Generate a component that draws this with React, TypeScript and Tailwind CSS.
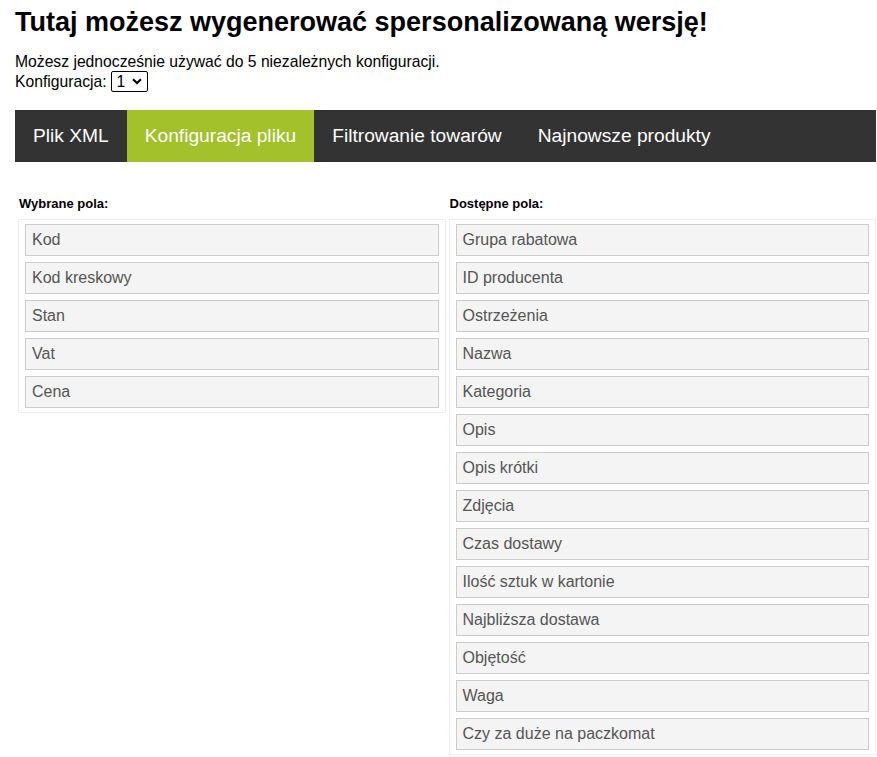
import React, { useState } from 'react';

const selectedFields = ['Kod', 'Kod kreskowy', 'Stan', 'Vat', 'Cena'];

const availableFields = [
  'Grupa rabatowa',
  'ID producenta',
  'Ostrzeżenia',
  'Nazwa',
  'Kategoria',
  'Opis',
  'Opis krótki',
  'Zdjęcia',
  'Czas dostawy',
  'Ilość sztuk w kartonie',
  'Najbliższa dostawa',
  'Objętość',
  'Waga',
  'Czy za duże na paczkomat',
];

const tabs = ['Plik XML', 'Konfiguracja pliku', 'Filtrowanie towarów', 'Najnowsze produkty'];

function FieldList({ title, items }: { title: string; items: string[] }) {
  return (
    <div className="pl-[3px]">
      <h3 className="text-[13px] font-bold text-black pl-[1px] mb-[5px]">{title}</h3>
      <ul className="border border-[#eeeeee] px-[6px] py-[4px] flex flex-col gap-[6px]">
        {items.map((item) => (
          <li
            key={item}
            className="h-[32px] flex items-center px-[6px] bg-[#f4f4f4] border border-[#cccccc] text-[16px] text-[#555555]"
          >
            {item}
          </li>
        ))}
      </ul>
    </div>
  );
}

export default function App() {
  const [config, setConfig] = useState('1');
  const [active, setActive] = useState(1);

  return (
    <div className="pl-[15px] pr-[1px] pt-[5px] pb-4 bg-white text-black font-['Liberation_Sans',Arial,sans-serif]">
      <h1 className="text-[27px] font-bold leading-[34px]">
        Tutaj możesz wygenerować spersonalizowaną wersję!
      </h1>

      <p className="mt-[14px] text-[15.7px] leading-[18px]">
        Możesz jednocześnie używać do 5 niezależnych konfiguracji.
      </p>
      <div className="text-[15.7px] leading-[20px] flex items-center gap-[4px]">
        <span>Konfiguracja:</span>
        <div className="relative">
          <select
            value={config}
            onChange={(e) => setConfig(e.target.value)}
            className="appearance-none border border-black rounded-[2px] h-[21px] w-[37px] pl-[5px] text-[15.7px] leading-[19px] bg-white"
          >
            {[1, 2, 3, 4, 5].map((n) => (
              <option key={n} value={n}>
                {n}
              </option>
            ))}
          </select>
          <svg
            className="absolute right-[6px] top-[7px] pointer-events-none"
            width="10"
            height="7"
            viewBox="0 0 10 7"
          >
            <path d="M1 1.2 L5 5 L9 1.2" fill="none" stroke="black" strokeWidth="2" />
          </svg>
        </div>
      </div>

      <nav className="mt-[18px] h-[52px] bg-[#333333] flex">
        {tabs.map((t, i) => (
          <button
            key={t}
            onClick={() => setActive(i)}
            className={
              'px-[18px] h-full text-[19.2px] text-white ' + (i === active ? 'bg-[#a2c12b]' : '')
            }
          >
            {t}
          </button>
        ))}
      </nav>

      <div className="mt-[32px] grid grid-cols-2 items-start">
        <FieldList title="Wybrane pola:" items={selectedFields} />
        <FieldList title="Dostępne pola:" items={availableFields} />
      </div>
    </div>
  );
}
